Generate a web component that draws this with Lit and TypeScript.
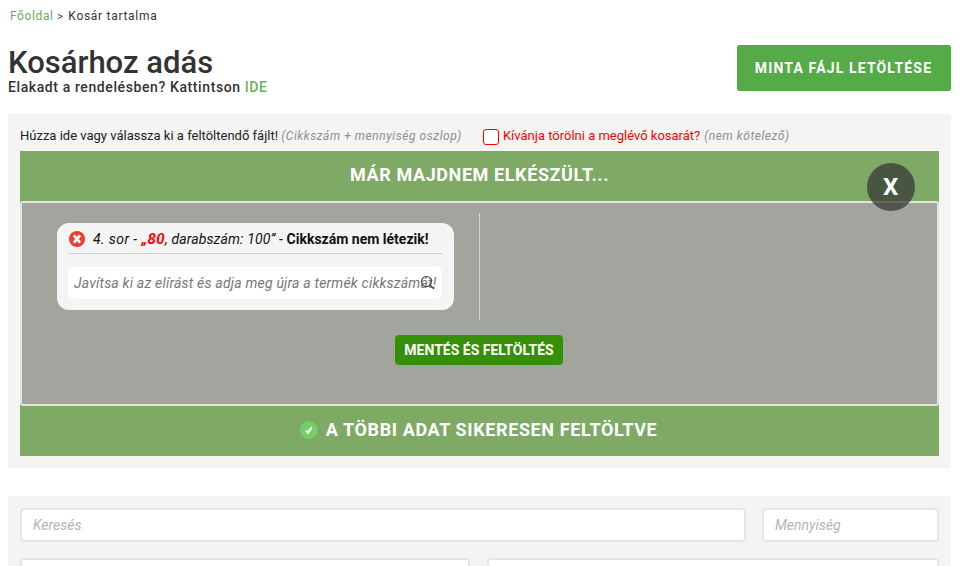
import { LitElement, html, css } from "lit";
import { customElement } from "lit/decorators.js";

@customElement("app-root")
export class AppRoot extends LitElement {
  static styles = css`
    :host { display: block; height: 566px; overflow: hidden; background: #fff; font-family: Roboto, sans-serif; color: #333; }
    .page { padding: 0 23px 0 8px; }
    .crumb { padding: 9px 0 0 2px; height: 45px; box-sizing: border-box; font-size: 12px; line-height: 14px; letter-spacing: .7px; color: #333; white-space: pre; }
    .crumb a { color: #6fa860; letter-spacing: .6px; }
    .crumb small { font-size: 11px; margin-right: 1px; }
    .head { display: flex; justify-content: space-between; align-items: flex-start; height: 69px; }
    h1 { margin: 0; padding-top: 2px; font-size: 31px; line-height: 32px; font-weight: 500; color: #333; }
    .sub { font-size: 14px; line-height: 16px; font-weight: 500; letter-spacing: .6px; color: #333; }
    .sub b { font-weight: 500; color: #6cae58; }
    .dl { width: 214px; height: 46px; padding-right: 1px; box-sizing: border-box; background: #56ab49; border-radius: 3px; color: #fff; font-size: 14px; font-weight: 700; letter-spacing: 1.15px; display: flex; align-items: center; justify-content: center; }
    .panel { background: #f4f4f2; padding: 0 12px 12px; position: relative; }
    .drop { display: flex; height: 37px; align-items: center; padding-top: 6px; box-sizing: border-box; font-size: 13px; color: #222; white-space: nowrap; }
    .drop em { color: #8f8f8f; font-size: 12px; letter-spacing: .55px; }
    .del { display: flex; align-items: center; color: #f00; margin-left: 21px; white-space: pre; }
    .del em { margin-left: 4px; }
    .cb { width: 16px; height: 16px; margin-top: 2px; box-sizing: border-box; border: 1px solid #f00; border-radius: 3px; background: #fff; margin-right: 4px; }
    .green { background: #7eaa65; height: 305px; display: flex; flex-direction: column; position: relative; }
    .t1 { height: 50px; box-sizing: border-box; padding-top: 13px; text-align: center; color: #fff; font-size: 18px; line-height: 21px; font-weight: 700; letter-spacing: .6px; }
    .close { position: absolute; left: 847px; top: 12px; width: 48px; height: 48px; padding-right: 1px; box-sizing: border-box; border-radius: 50%; background: rgba(50,50,50,.7); color: #fff; font-size: 24px; font-weight: 700; display: flex; align-items: center; justify-content: center; }
    .gray { height: 205px; box-sizing: border-box; background: #a1a59d; border: 2px solid #dfe4dc; border-radius: 3px; display: flex; flex-direction: column; align-items: center; }
    .cols { display: flex; width: 100%; padding-top: 10px; height: 107px; box-sizing: content-box; }
    .col { width: 458px; height: 107px; border-right: 1px solid #d2d4cf; padding-left: 35px; padding-top: 10px; box-sizing: border-box; }
    .card { width: 397px; height: 87px; background: #f4f4f4; border-radius: 12px; padding: 0 12px; box-sizing: border-box; }
    .msg { height: 31px; padding-top: 2px; border-bottom: 1px solid #ccc; display: flex; align-items: center; gap: 8px; font-size: 14px; color: #111; box-sizing: border-box; white-space: nowrap; }
    .msg em { letter-spacing: .4px; }
    .msg em b { color: #f00; font-size: 15px; }
    .msg em i { letter-spacing: .14px; }
    .msg strong { font-weight: 700; }
    .field { margin: 13px 0 0 -1px; height: 32px; background: #fff; border-radius: 6px; position: relative; padding-left: 6px; font-size: 14px; line-height: 32px; font-style: italic; color: #777; letter-spacing: .2px; white-space: nowrap; overflow: hidden; }
    .field svg { position: absolute; right: 7px; top: 8px; }
    .save { margin: 15px 1px 0 0; width: 168px; height: 30px; padding-bottom: 1px; box-sizing: border-box; background: #369005; border-radius: 4px; color: #fff; font-size: 14px; font-weight: 700; display: flex; align-items: center; justify-content: center; }
    .t2 { flex: 1; display: flex; align-items: center; justify-content: center; gap: 8px; padding: 0 2px 3px 0; color: #fff; font-size: 18px; font-weight: 700; letter-spacing: .62px; }
    .gap { height: 28px; }
    .search { height: 70px; padding-top: 12px; box-sizing: border-box; }
    .row { display: flex; gap: 16px; margin-bottom: 16px; }
    .row2 { gap: 17px; }
    .in { height: 34px; box-sizing: border-box; background: #fff; border: 2px solid #e6e6e4; border-radius: 4px; font-size: 14px; line-height: 30px; font-style: italic; color: #b4b4b4; padding-left: 11px; }
    .grow { flex: 1; }
    .q { width: 177px; }
    .half { width: 450px; }
  `;

  render() {
    return html`<div class="page">
      <div class="crumb"><a>Főoldal</a> <small>&gt;</small> Kosár tartalma</div>
      <div class="head">
        <div><h1>Kosárhoz adás</h1><div class="sub">Elakadt a rendelésben? Kattintson <b>IDE</b></div></div>
        <div class="dl">MINTA FÁJL LETÖLTÉSE</div>
      </div>
      <div class="panel">
        <div class="drop">
          <span>Húzza ide vagy válassza ki a feltöltendő fájlt! <em>(Cikkszám + mennyiség oszlop)</em></span>
          <span class="del"><span class="cb"></span>Kívánja törölni a meglévő kosarát?<em>(nem kötelező)</em></span>
        </div>
        <div class="green">
          <div class="t1">MÁR MAJDNEM ELKÉSZÜLT...</div>
          <div class="gray">
            <div class="cols"><div class="col"><div class="card">
              <div class="msg">
                <svg width="16" height="16" viewBox="0 0 16 16"><circle cx="8" cy="8" r="8" fill="#ee3b33"/><path d="M4.9 4.4l6.2 7.2M11.1 4.4l-6.2 7.2" stroke="#fff" stroke-width="2.8"/></svg>
                <span><em>4. sor - <b>„80</b><i>, darabszám: 100” - </i></em><strong>Cikkszám nem létezik!</strong></span>
              </div>
              <div class="field">Javítsa ki az elírást és adja meg újra a termék cikkszámát!
                <svg width="15" height="15" viewBox="0 0 15 15" fill="none" stroke="#444" stroke-width="1.1"><circle cx="6.5" cy="6.5" r="5"/><path d="M10 10l4 4" stroke-width="1.4"/></svg>
              </div>
            </div></div></div>
            <div class="save">MENTÉS ÉS FELTÖLTÉS</div>
          </div>
          <div class="t2">
            <svg width="18" height="18" viewBox="0 0 18 18"><circle cx="9" cy="9" r="9" fill="#74cf6b"/><path d="M6 9.5l2 2.4 3.8-5.8" fill="none" stroke="#fff" stroke-width="2"/></svg>
            A TÖBBI ADAT SIKERESEN FELTÖLTVE
          </div>
          <div class="close">X</div>
        </div>
      </div>
      <div class="gap"></div>
      <div class="panel search">
        <div class="row"><div class="in grow">Keresés</div><div class="in q">Mennyiség</div></div>
        <div class="row row2"><div class="in half"></div><div class="in grow"></div></div>
      </div>
    </div>`;
  }
}
